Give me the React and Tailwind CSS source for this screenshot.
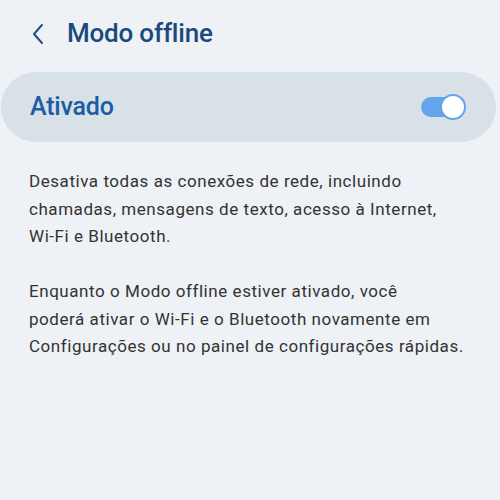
import React from "react";

export default function App() {
  return (
    <div
      className="w-[500px] h-[500px] bg-[#eef1f5] overflow-hidden"
      style={{ fontFamily: "Roboto, 'Noto Sans', sans-serif" }}
    >
      {/* header */}
      <header className="flex items-center h-[67px] pl-[30px]">
        <svg width="16" height="24" viewBox="0 0 16 24" className="mt-[1px]">
          <path d="M12 3 L4 12 L12 21" fill="none" stroke="#1d4f82" strokeWidth="2" strokeLinecap="round" strokeLinejoin="round" />
        </svg>
        <h1 className="ml-[21px] text-[26px] font-medium text-[#1a4a7c] tracking-[-0.2px]">Modo offline</h1>
      </header>

      {/* switch card */}
      <div className="ml-[1px] mr-[4px] mt-[5px] h-[70px] rounded-[35px] bg-[#d8e0e8] flex items-center justify-between pl-[29px] pr-[30px]">
        <span className="text-[25px] font-medium text-[#1b5da3] tracking-[-0.2px]">Ativado</span>
        <div className="relative w-[45px] h-[26px]">
          <div className="absolute left-0 top-[3px] w-[40px] h-[20px] rounded-full bg-[#62a5ec]" />
          <div className="absolute right-0 top-0 w-[26px] h-[26px] rounded-full bg-white border-2 border-[#62a5ec]" />
        </div>
      </div>

      {/* description */}
      <div className="pl-[29px] pt-[26px] text-[17px] leading-[27.5px] tracking-[0.55px] text-[#333333]">
        <p>
          Desativa todas as conexões de rede, incluindo
          <br />
          chamadas, mensagens de texto, acesso à Internet,
          <br />
          Wi-Fi e Bluetooth.
        </p>
        <p className="mt-[27.5px]">
          Enquanto o Modo offline estiver ativado, você
          <br />
          poderá ativar o Wi-Fi e o Bluetooth novamente em
          <br />
          Configurações ou no painel de configurações rápidas.
        </p>
      </div>
    </div>
  );
}
